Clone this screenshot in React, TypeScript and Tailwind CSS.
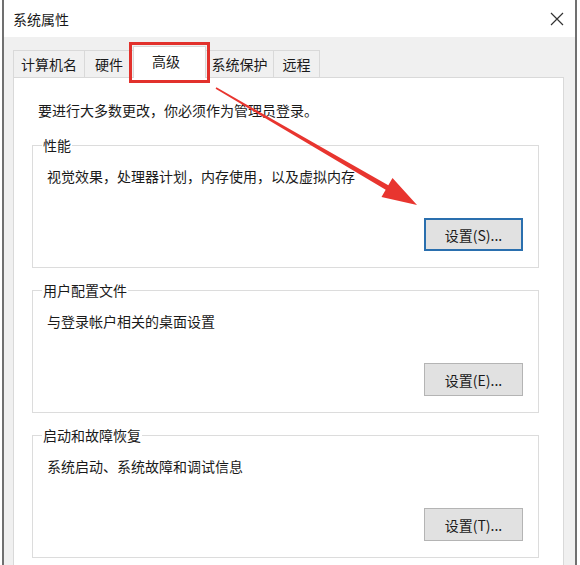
import React from 'react'

const tabs = [
  { label: '计算机名', w: 'w-[72px]' },
  { label: '硬件', w: 'w-[50px]' },
  { label: '高级', w: 'w-[73px]', active: true },
  { label: '系统保护', w: 'w-[69px]' },
  { label: '远程', w: 'w-[47px]' },
]

function SettingsButton({ label, focused }: { label: string; focused?: boolean }) {
  return (
    <button
      className={
        focused
          ? 'w-[99px] h-[33px] bg-[#e1e1e1] border-2 border-[#2a6fae] text-sm text-[#1a1a1a]'
          : 'w-[99px] h-[33px] bg-[#e1e1e1] border border-[#b4b4b4] text-sm text-[#1a1a1a]'
      }
    >
      {label}
    </button>
  )
}

function Group({ title, desc, button, focused, className }: { title: string; desc: string; button: string; focused?: boolean; className?: string }) {
  return (
    <fieldset className={'border border-[#dcdcdc] pl-[10px] pr-[15px] pb-[16px] ' + (className ?? '')}>
      <legend className="text-sm leading-5 px-[1px] -ml-px text-[#1a1a1a]">{title}</legend>
      <p className="mt-[11px] pl-[4px] text-sm leading-5 text-[#1a1a1a]">{desc}</p>
      <div className="mt-[32px] flex justify-end">
        <SettingsButton label={button} focused={focused} />
      </div>
    </fieldset>
  )
}

export default function App() {
  return (
    <div className="relative w-[580px] h-[565px] overflow-hidden bg-white font-['Noto_Sans_CJK_SC','Microsoft_YaHei',sans-serif]">
      {/* Window */}
      <div className="ml-[2px] w-[575px] h-full border-x-2 border-[#707070] flex flex-col">
        {/* Title bar */}
        <div className="h-[37px] shrink-0 bg-white flex items-center justify-between pl-[9px] pr-[11px]">
          <span className="text-sm text-[#1a1a1a]">系统属性</span>
          <svg width="14" height="14" viewBox="0 0 14 14" fill="none" stroke="#333" strokeWidth="1.2">
            <path d="M1 1l12 12M13 1L1 13" />
          </svg>
        </div>

        {/* Body */}
        <div className="flex-1 bg-[#f0f0f0] pl-[9px] pr-[11px] pt-[9px] flex flex-col">
          {/* Tabs */}
          <div className="flex items-end h-[32px] -mb-px relative z-10">
            {tabs.map((t, i) =>
              t.active ? (
                <div
                  key={t.label}
                  className={`${t.w} h-[32px] -ml-px bg-white border border-b-0 border-[#d9d9d9] flex items-center pl-[18px] pb-[4px] text-sm text-[#1a1a1a]`}
                >
                  {t.label}
                </div>
              ) : (
                <div
                  key={t.label}
                  className={`${t.w} h-[27px] mb-px ${i > 0 ? '-ml-px' : ''} bg-[#f0f0f0] border border-b-0 border-[#d9d9d9] flex items-center justify-center text-sm text-[#1a1a1a]`}
                >
                  {t.label}
                </div>
              )
            )}
          </div>

          {/* Panel */}
          <div className="h-[600px] shrink-0 bg-white border border-[#d9d9d9] pl-[18px] pr-[24px] pt-[22px]">
            <p className="ml-[6px] text-sm leading-5 text-[#1a1a1a]">要进行大多数更改，你必须作为管理员登录。</p>
            <Group className="mt-[15px]" title="性能" desc="视觉效果，处理器计划，内存使用，以及虚拟内存" button="设置(S)..." focused />
            <Group className="mt-[12px]" title="用户配置文件" desc="与登录帐户相关的桌面设置" button="设置(E)..." />
            <Group className="mt-[12px]" title="启动和故障恢复" desc="系统启动、系统故障和调试信息" button="设置(T)..." />
          </div>
        </div>
      </div>

      {/* Red highlight box */}
      <div className="absolute left-[129px] top-[42px] w-[81px] h-[41px] border-[3px] border-[#e2312c] z-20" />

      {/* Red arrow */}
      <svg className="absolute inset-0 z-20 pointer-events-none" width="580" height="565" viewBox="0 0 580 565">
        <polygon
          fill="#e8352f"
          points="216.4,87.3 388.3,185.3 392.5,178 417,205 381.5,197 385.7,189.7 215.6,88.7"
        />
      </svg>
    </div>
  )
}
